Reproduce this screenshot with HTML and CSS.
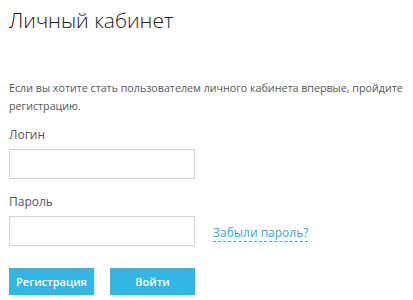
FILE: index.html
```html
<!DOCTYPE html>
<html lang="ru">
<head>
    <meta charset="UTF-8">
    <meta name="viewport" content="width=device-width, initial-scale=1.0">
    <title>Личный кабинет</title>
    <link rel="stylesheet" href="styles.css">
</head>
<body>
    <div class="cabinet">
        <h1 class="cabinet-title">Личный кабинет</h1>
        <p class="cabinet-note">Если вы хотите стать пользователем личного кабинета впервые, пройдите регистрацию.</p>
        <form class="login-form">
            <label class="field-label" for="login">Логин</label>
            <div class="field-row">
                <input type="text" class="field-input" id="login">
            </div>
            <label class="field-label" for="password">Пароль</label>
            <div class="field-row">
                <input type="password" class="field-input" id="password">
                <a href="#" class="forgot-link">Забыли пароль?</a>
            </div>
            <div class="button-row">
                <button type="button" class="btn">Регистрация</button>
                <button type="submit" class="btn">Войти</button>
            </div>
        </form>
    </div>
</body>
</html>
```

FILE: styles.css
```css
* {
    margin: 0;
    padding: 0;
    box-sizing: border-box;
}
body {
    font-family: "Open Sans", sans-serif;
    color: #555555;
    background-color: #ffffff;
}
.cabinet {
    padding: 5px 0 0 9px;
}
.cabinet-title {
    font-size: 21px;
    font-weight: 300;
    color: #1a1a1a;
    line-height: 30px;
}
.cabinet-note {
    margin-top: 44px;
    font-size: 10.7px;
    line-height: 18px;
}
.login-form {
    margin-top: 11px;
    display: flex;
    flex-direction: column;
}
.field-label {
    font-size: 12px;
    line-height: 17px;
    margin-bottom: 6px;
}
.field-row {
    display: flex;
    align-items: center;
    gap: 18px;
    margin-bottom: 14px;
}
.field-input {
    width: 186px;
    height: 30px;
    border: 1px solid #d5d5d5;
    background-color: #ffffff;
    font-family: inherit;
    font-size: 12px;
    padding: 0 6px;
    outline: none;
}
.forgot-link {
    font-size: 12px;
    color: #33a9d6;
    text-decoration: none;
    border-bottom: 1px dashed #33a9d6;
    line-height: 16px;
    margin-top: 4px;
}
.button-row {
    display: flex;
    gap: 16px;
    margin-top: 8px;
}
.btn {
    width: 85px;
    height: 27px;
    border: none;
    background-color: #33b6e1;
    color: #ffffff;
    font-family: inherit;
    font-size: 11px;
    font-weight: 600;
    cursor: pointer;
}
```
